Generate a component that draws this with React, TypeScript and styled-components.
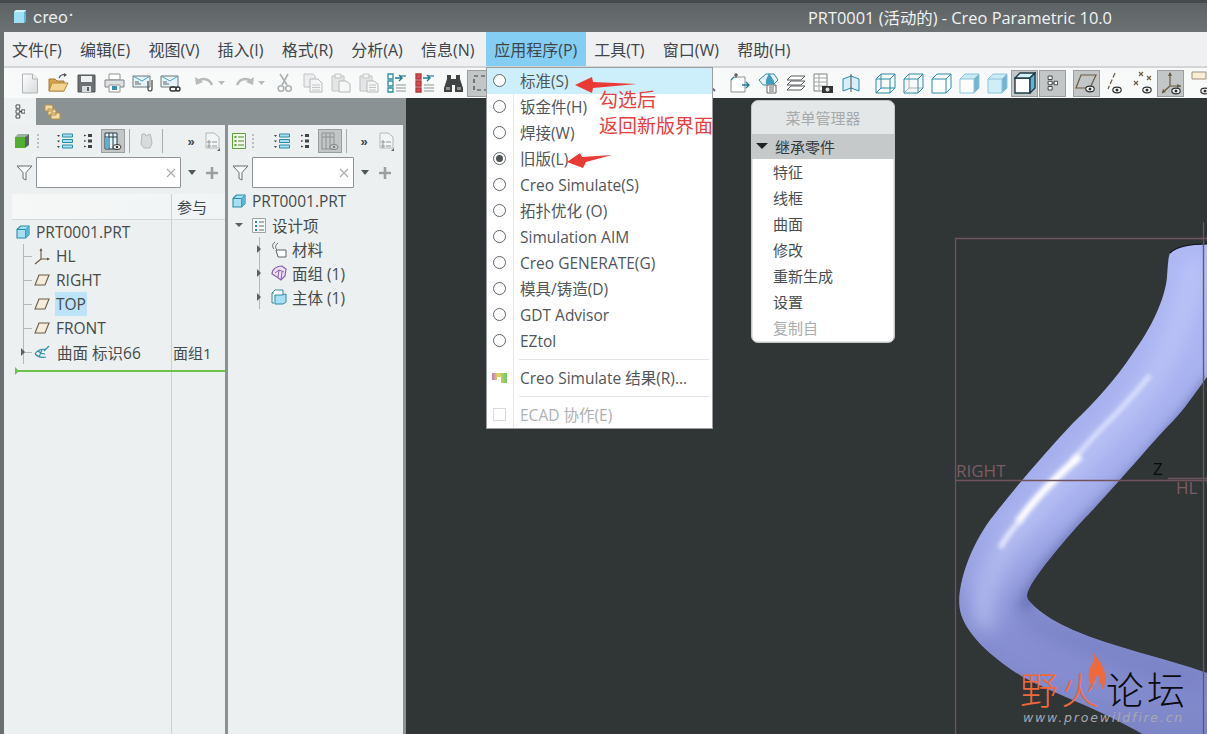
import React from "react";
import styled, { createGlobalStyle, css } from "styled-components";

const FONT = `"Open Sans", "Noto Sans CJK SC", "Noto Sans", sans-serif`;

const Global = createGlobalStyle`
  html, body { margin: 0; padding: 0; background: #303536; }
  * { box-sizing: border-box; }
`;

const Root = styled.div`
  position: relative;
  width: 1207px;
  height: 734px;
  overflow: hidden;
  display: flex;
  flex-direction: column;
  font-family: ${FONT};
  font-size: 15.5px;
  color: #454b4c;
`;

const TitleBar = styled.div`
  height: 32px;
  flex: none;
  display: flex;
  align-items: center;
  justify-content: space-between;
  padding: 0 95px 2px 13px;
  border-top: 3px solid #45494a;
  background: linear-gradient(#5d6364, #6c7273);
  color: #f1f3f3;
`;
const Logo = styled.div`
  display: flex;
  align-items: center;
  gap: 6px;
  font-size: 16.5px;
  font-family: "Inter", sans-serif;
  color: #e9eef0;
`;
const LogoDot = styled.sup`
  font-size: 7px;
  line-height: 0;
  margin-left: 1px;
  vertical-align: 6px;
`;
const AppTitle = styled.div`
  font-size: 16.4px;
  white-space: nowrap;
`;

const Body = styled.div`
  flex: 1;
  min-height: 0;
  display: flex;
  flex-direction: column;
  border-left: 4px solid #6a6f70;
`;

const MenuBar = styled.nav`
  height: 34px;
  flex: none;
  display: flex;
  align-items: stretch;
  background: #eff0f1;
`;
const MenuItem = styled.div<{ $open?: boolean }>`
  display: flex;
  align-items: center;
  padding: 0 8px;
  margin-right: 2.2px;
  white-space: nowrap;
  font-size: 16px;
  color: #40464a;
  ${(p) => p.$open && css`
    background: #84cdf3;
    padding-right: 9px;
    margin-left: 1.6px;
    margin-right: 0;
  `}
`;

const ToolBar = styled.div`
  height: 32px;
  flex: none;
  display: flex;
  align-items: center;
  overflow: hidden;
  background: #f8f9f9;
  border-top: 2px solid #d3d5d6;
`;
const Spacer = styled.div<{ $w: number }>`
  flex: none;
  width: ${(p) => p.$w}px;
`;
const Slot = styled.div<{ $w?: number; $active?: boolean; $h?: number }>`
  flex: none;
  width: ${(p) => p.$w ?? 28}px;
  height: ${(p) => p.$h ?? 27}px;
  display: flex;
  align-items: center;
  justify-content: center;
  ${(p) => p.$active && css`
    background: #c3c6c7;
    border: 1px solid #9a9e9f;
  `}
`;

const Main = styled.div`
  flex: 1;
  min-height: 0;
  display: flex;
`;
const Side = styled.aside`
  width: 402px;
  flex: none;
  display: flex;
  flex-direction: column;
  background: #8b9294;
`;
const TabStrip = styled.div`
  height: 27px;
  flex: none;
  display: flex;
`;
const Tab = styled.div<{ $active?: boolean }>`
  width: 32px;
  display: flex;
  align-items: center;
  justify-content: center;
  background: ${(p) => (p.$active ? "#edf1f1" : "transparent")};
`;
const Panels = styled.div`
  flex: 1;
  min-height: 0;
  display: flex;
  gap: 3px;
  padding-right: 3px;
`;
const Panel = styled.section<{ $w: number }>`
  width: ${(p) => p.$w}px;
  flex: none;
  display: flex;
  flex-direction: column;
  background: #ecf0f0;
`;
const PanelTools = styled.div`
  height: 32px;
  flex: none;
  display: flex;
  align-items: center;
`;
const Sep = styled.div`
  width: 1px;
  height: 24px;
  flex: none;
  background: #a9adae;
`;
const FilterRow = styled.div`
  height: 31px;
  flex: none;
  display: flex;
  align-items: center;
`;
const FilterInput = styled.div<{ $w: number }>`
  width: ${(p) => p.$w}px;
  height: 31px;
  flex: none;
  display: flex;
  align-items: center;
  justify-content: flex-end;
  padding-right: 4px;
  background: #fff;
  border: 1px solid #8f9596;
  border-radius: 1px;
`;

const Table = styled.div`
  position: relative;
  flex: 1;
  margin: 6px 0 0 8px;
  display: flex;
  flex-direction: column;
  &::after {
    content: "";
    position: absolute;
    left: 159px;
    top: 0;
    bottom: 0;
    width: 1px;
    background: #ccd1d2;
  }
`;
const TableHead = styled.div`
  height: 26px;
  flex: none;
  display: flex;
  align-items: center;
  justify-content: flex-end;
  padding: 0 18px 0 0;
  background: linear-gradient(90deg, #f6f8f8, #f1f4f4);
  border-bottom: 1px solid #d5d9da;
  font-size: 15px;
  color: #40464a;
`;
const Row = styled.div<{ $pad: number; $gap?: number }>`
  position: relative;
  height: 24px;
  flex: none;
  display: flex;
  align-items: center;
  gap: ${(p) => p.$gap ?? 6}px;
  padding-left: ${(p) => p.$pad}px;
  white-space: nowrap;
`;
const ChildRow = styled(Row)`
  &::before {
    content: "";
    position: absolute;
    left: 11px;
    top: 0;
    height: 100%;
    width: 1px;
    background: #b3b8b9;
  }
  &::after {
    content: "";
    position: absolute;
    left: 11px;
    top: 12px;
    width: 9px;
    height: 1px;
    background: #b3b8b9;
  }
`;
const NestedRow = styled(Row)`
  &::before {
    content: "";
    position: absolute;
    left: 31px;
    top: 0;
    height: 100%;
    width: 1px;
    background: #b3b8b9;
  }
`;
const Label = styled.span<{ $selected?: boolean }>`
  ${(p) => p.$selected && css`
    background: #bde3f8;
    line-height: 24px;
    margin: 0 -1px;
    padding: 0 1px;
  `}
`;
const RefCell = styled.span`
  position: absolute;
  left: 161px;
  font-size: 15px;
`;
const ArrowRight = styled.i<{ $left: number }>`
  position: absolute;
  z-index: 1;
  left: ${(p) => p.$left}px;
  top: 8px;
  width: 0;
  height: 0;
  border-left: 4px solid #5a6061;
  border-top: 4px solid transparent;
  border-bottom: 4px solid transparent;
`;
const ArrowDown = styled.i<{ $left: number }>`
  position: absolute;
  z-index: 1;
  left: ${(p) => p.$left}px;
  top: 10px;
  width: 0;
  height: 0;
  border-top: 4px solid #5a6061;
  border-left: 4px solid transparent;
  border-right: 4px solid transparent;
`;
const GreenLine = styled.div`
  position: relative;
  z-index: 1;
  flex: none;
  height: 1.5px;
  margin: 6px 0 0 3px;
  background: #6cc24a;
  &::before {
    content: "";
    position: absolute;
    left: 0;
    top: -3px;
    border-left: 4px solid #6cc24a;
    border-top: 4px solid transparent;
    border-bottom: 4px solid transparent;
  }
`;
const Tree = styled.div`
  margin-top: 1px;
  display: flex;
  flex-direction: column;
`;

const Canvas = styled.main`
  position: relative;
  flex: 1;
  min-width: 0;
  overflow: hidden;
  background: #303536;
`;
const Scene = styled.svg`
  position: absolute;
  inset: 0;
  width: 100%;
  height: 100%;
`;
const DatumText = styled.span<{ $x: number; $y: number; $dark?: boolean }>`
  position: absolute;
  left: ${(p) => p.$x}px;
  top: ${(p) => p.$y}px;
  font-family: "Open Sans", sans-serif;
  font-size: 17px;
  line-height: 20px;
  color: ${(p) => (p.$dark ? "#0a0a0a" : "#7d5c62")};
`;
const WmCn = styled.span<{ $x: number; $orange?: boolean }>`
  position: absolute;
  left: ${(p) => p.$x}px;
  top: 570px;
  font-family: "Noto Sans CJK SC", sans-serif;
  font-weight: 300;
  font-size: 38px;
  line-height: 40px;
  letter-spacing: 3px;
  white-space: nowrap;
  color: ${(p) => (p.$orange ? "#f0693a" : "#0c0c10")};
`;
const WmUrl = styled.span`
  position: absolute;
  left: 617px;
  top: 611px;
  font-family: "DejaVu Sans", sans-serif;
  font-style: italic;
  font-size: 12.5px;
  line-height: 18px;
  letter-spacing: 1.8px;
  white-space: nowrap;
  color: #a6a9b0;
`;

const Dropdown = styled.div`
  position: absolute;
  left: 486px;
  top: 67px;
  width: 227px;
  height: 362px;
  background: #fff;
  border: 1px solid #9a9ea0;
  z-index: 5;
  display: flex;
  flex-direction: column;
  &::before {
    content: "";
    position: absolute;
    left: 26px;
    top: 0;
    bottom: 0;
    width: 1px;
    background: #e6e8e9;
  }
`;
const DropItem = styled.div<{ $hot?: boolean; $off?: boolean }>`
  position: relative;
  height: 26px;
  flex: none;
  display: flex;
  align-items: center;
  white-space: nowrap;
  font-size: 15.5px;
  padding: 0 0 1px 33px;
  color: ${(p) => (p.$off ? "#adb1b3" : "#50565a")};
  ${(p) => p.$hot && css`background: #cdeffc;`}
`;
const DropIcon = styled.span`
  position: absolute;
  left: 5px;
  top: 5px;
  width: 15px;
  height: 15px;
  display: flex;
  align-items: center;
  justify-content: center;
`;
const Radio = styled.span<{ $on?: boolean }>`
  width: 13px;
  height: 13px;
  border-radius: 50%;
  border: 1.4px solid #5f6566;
  background: #fff;
  display: flex;
  align-items: center;
  justify-content: center;
  &::after {
    content: "";
    width: 7px;
    height: 7px;
    border-radius: 50%;
    background: ${(p) => (p.$on ? "#4f5556" : "transparent")};
  }
`;
const DropSep = styled.div<{ $mt: number; $mb: number }>`
  flex: none;
  height: 1px;
  margin: ${(p) => p.$mt}px 3px ${(p) => p.$mb}px 32px;
  background: #e2e4e5;
`;
const CheckBox = styled.span`
  width: 13px;
  height: 13px;
  border: 1px solid #d9dbdc;
  background: #fff;
`;

const Manager = styled.div`
  position: absolute;
  left: 345px;
  top: 2px;
  width: 144px;
  height: 243px;
  background: #e4e7e8;
  border: 1px solid #c4c7c8;
  border-radius: 7px;
  z-index: 3;
  display: flex;
  flex-direction: column;
  overflow: hidden;
`;
const ManagerTitle = styled.div`
  height: 33px;
  flex: none;
  display: flex;
  align-items: center;
  justify-content: center;
  color: #a6aaab;
  font-size: 15px;
`;
const ManagerHead = styled.div`
  height: 25px;
  flex: none;
  display: flex;
  align-items: center;
  gap: 7px;
  padding: 0 0 1px 4px;
  background: #c5c9ca;
  color: #33383a;
  font-size: 15px;
  &::before {
    content: "";
    border-top: 6px solid #1f2324;
    border-left: 6px solid transparent;
    border-right: 6px solid transparent;
  }
`;
const ManagerList = styled.div`
  flex: 1;
  margin: 0 1px 1px;
  background: #fff;
  display: flex;
  flex-direction: column;
`;
const ManagerItem = styled.div<{ $off?: boolean }>`
  height: 26px;
  flex: none;
  display: flex;
  align-items: center;
  padding: 0 0 2px 20px;
  font-size: 15px;
  color: ${(p) => (p.$off ? "#a9adae" : "#484e50")};
`;

const Overlay = styled.svg`
  position: absolute;
  left: 0;
  top: 0;
  width: 1207px;
  height: 734px;
  z-index: 7;
  pointer-events: none;
`;
const Note = styled.div<{ $y: number }>`
  position: absolute;
  left: 599px;
  top: ${(p) => p.$y}px;
  z-index: 8;
  color: #e4403d;
  font-family: "Noto Sans CJK SC", sans-serif;
  font-size: 19px;
  line-height: 26px;
  white-space: nowrap;
`;

/* ---------- icons ---------- */
type S = { s?: number };
const T = "#2b8ba6";

const CubeSmall = ({ s = 14 }: S) => (
  <svg width={s} height={s} viewBox="0 0 14 14">
    <path d="M1 4.5 4.5 1H13v8.5L9.5 13H1z" fill="#a7e0f4" stroke={T} strokeWidth="1.1" />
    <path d="M1 4.5h8.5V13M9.5 4.5 13 1" fill="none" stroke={T} strokeWidth="1" />
    <path d="M9.5 4.5 13 1v8.5L9.5 13z" fill="#5cb4d2" />
  </svg>
);
const NewDoc = () => (
  <svg width="18" height="21" viewBox="0 0 18 21">
    <defs><linearGradient id="nd" x1="0" y1="0" x2="1" y2="1"><stop offset="0" stopColor="#fff" /><stop offset="1" stopColor="#d5dadc" /></linearGradient></defs>
    <path d="M1.5 1h10l5 5v14h-15z" fill="url(#nd)" stroke="#aeb4b6" />
    <path d="M11.5 1v5h5" fill="#eef0f1" stroke="#aeb4b6" />
  </svg>
);
const OpenFolder = () => (
  <svg width="21" height="20" viewBox="0 0 21 20">
    <path d="M1 6h6l2 2h7v10H1z" fill="#d9a24c" stroke="#a07a3c" />
    <path d="M1 18 4 10h16l-4 8z" fill="#f3d48f" stroke="#b08a45" />
    <path d="M11 5c1-3 4-4 7-3" fill="none" stroke="#555" strokeWidth="1.3" />
    <path d="M16 0l3 2-3 2z" fill="#555" />
  </svg>
);
const Save = () => (
  <svg width="19" height="19" viewBox="0 0 19 19">
    <path d="M1 1h17v17H1z" fill="#6c7274" stroke="#4f5455" />
    <path d="M4 2h11v6H4z" fill="#eef0f1" />
    <path d="M5 12h9v6H5z" fill="#d8dcdd" />
    <path d="M10 13h2v4h-2z" fill="#596062" />
  </svg>
);
const Printer = () => (
  <svg width="21" height="20" viewBox="0 0 21 20">
    <path d="M5 1h11v6H5z" fill="#fff" stroke="#8f9596" />
    <path d="M1 7h19v7H1z" fill="#dfe2e3" stroke="#7e8485" />
    <path d="M5 12h11v7H5z" fill="#fff" stroke="#8f9596" />
    <path d="M8 13h5v4H8z" fill="#3d8db5" />
  </svg>
);
const Mail = ({ clip }: { clip?: boolean }) => (
  <svg width="21" height="20" viewBox="0 0 21 20">
    <path d="M1 3h17v11H1z" fill="#e6f3f8" stroke="#6f7778" />
    <path d="M1 3l9 5 8-5" fill="none" stroke="#4aa2c4" />
    <path d="M3 11h6M3 9h4" stroke="#5f6566" />
    {clip ? (
      <path d="M16 8v8a2 2 0 0 0 4 0V7" fill="none" stroke="#444" strokeWidth="1.2" />
    ) : (
      <path d="M10 16a2 2 0 0 1 2-2h2a2 2 0 0 1 0 4h-2a2 2 0 0 1-2-2zm6 0a2 2 0 0 1 2-2 2 2 0 0 1 0 4 2 2 0 0 1-2-2z" fill="none" stroke="#333" strokeWidth="1.4" />
    )}
  </svg>
);
const Undo = ({ flip }: { flip?: boolean }) => (
  <svg width="32" height="16" viewBox="0 0 32 16">
    <g transform={flip ? "translate(21 0) scale(-1 1)" : undefined}>
      <path d="M4 6c4-3 11-3 14 4" fill="none" stroke="#b6babb" strokeWidth="2.6" />
      <path d="M1 2l1 8 7-3z" fill="#b6babb" />
    </g>
    <path d="M24 6h7l-3.5 4z" fill="#b6babb" />
  </svg>
);
const Scissors = () => (
  <svg width="16" height="20" viewBox="0 0 16 20">
    <path d="M3 1l7 11M11 1 5 12" stroke="#aab0b2" strokeWidth="1.6" fill="none" />
    <circle cx="4" cy="15.5" r="2.8" fill="none" stroke="#aab0b2" strokeWidth="1.5" />
    <circle cx="11.5" cy="15.5" r="2.8" fill="none" stroke="#aab0b2" strokeWidth="1.5" />
  </svg>
);
const Copy = () => (
  <svg width="20" height="20" viewBox="0 0 20 20">
    <path d="M1 1h9l2 2v11H1z" fill="#eceeef" stroke="#c0c4c5" />
    <path d="M7 6h8l4 4v9H7z" fill="#f4f5f6" stroke="#b6babb" />
    <path d="M9 12h8M9 14.500h8M9 17h8" stroke="#c2c6c7" />
  </svg>
);
const Paste = ({ lines }: { lines?: boolean }) => (
  <svg width="20" height="20" viewBox="0 0 20 20">
    <path d="M1 3h12v15H1z" fill="#e3e5e6" stroke="#bfc3c4" />
    <path d="M4 1h6v4H4z" fill="#f3f4f4" stroke="#bfc3c4" />
    <path d="M8 8h7l4 3v8H8z" fill="#f5f6f6" stroke="#b6babb" />
    {lines && <path d="M10 12h7M10 14.500h7M10 17h7" stroke="#bfc3c4" />}
  </svg>
);
const RepeatList = ({ c }: { c: string }) => (
  <svg width="20" height="20" viewBox="0 0 20 20">
    <path d="M1 1h5v5H1zM1 8h5v5H1zM1 15h5v4H1z" fill={c === "red" ? "#d84a50" : "#fff"} stroke={c === "red" ? "#b7353a" : T} strokeWidth="1.3" />
    <path d="M8 5h7M12 2l3 3-3 3" fill="none" stroke="#1f7d9a" strokeWidth="1.4" />
    <path d="M19 3h-6" stroke="#1f7d9a" strokeWidth="1.2" />
    <path d="M9 12h10M9 15h10M9 18h10" stroke="#8f9596" />
  </svg>
);
const Binoculars = () => (
  <svg width="21" height="19" viewBox="0 0 21 19">
    <path d="M4 1h4v4h5V1h4v4l3 9v4h-8v-7H9v7H1v-4l3-9z" fill="#3f4344" />
    <path d="M3 13h4v3H3zM14 13h4v3h-4z" fill="#8b9092" />
  </svg>
);
const BoxSelect = () => (
  <svg width="16" height="16" viewBox="0 0 16 16">
    <path d="M1 1h14v14H1z" fill="none" stroke="#3b4041" strokeDasharray="4 3" strokeWidth="1.2" />
  </svg>
);
const Lens = () => (
  <svg width="24" height="22" viewBox="0 0 24 22">
    <circle cx="8" cy="8" r="6" fill="#eef4f6" stroke="#7b8182" strokeWidth="1.3" />
    <path d="M12 12l7 7" stroke="#6b7172" strokeWidth="2" />
  </svg>
);
const Gem = () => (
  <svg width="22" height="23" viewBox="0 0 22 23">
    <path d="M5 5h11v15H2V8z" fill="#fff" stroke="#8a9091" />
    <path d="M5 5 2 8M13 13h7M17 10l3 3-3 3" fill="none" stroke="#1f7d9a" strokeWidth="1.3" />
    <path d="M7 1v5M5 3h4" stroke="#333" />
  </svg>
);
const Section = () => (
  <svg width="21" height="22" viewBox="0 0 21 22">
    <path d="M1 8l7-6h8l4 6-5 5H5z" fill="#e8f6fb" stroke={T} />
    <path d="M11 1l5 8v3h-8V8z" fill="#3f9dc4" />
    <path d="M9 13h9v8H9z" fill="#fff" stroke="#666" />
    <path d="M11 15h5M11 17h5M11 19h5" stroke="#666" />
  </svg>
);
const Layers = () => (
  <svg width="20" height="16" viewBox="0 0 20 16">
    <path d="M5 1h14l-4 4H1zM5 6h14l-4 4H1zM5 11h14l-4 4H1z" fill="#fff" stroke="#565c5d" />
  </svg>
);
const TableCam = () => (
  <svg width="21" height="21" viewBox="0 0 21 21">
    <path d="M1 1h13v17H1z" fill="#fff" stroke="#7a8081" />
    <path d="M1 5h13M1 9h13M1 13h13M6 1v17" stroke="#a0a5a6" />
    <path d="M9 13h11v7H9z" fill="#333" />
    <circle cx="14.500" cy="16.500" r="2" fill="#ddd" />
  </svg>
);
const Book = () => (
  <svg width="18" height="20" viewBox="0 0 18 20">
    <path d="M9 3 1 6v12l8-3 8 3V6z" fill="#d8eff7" stroke={T} />
    <path d="M9 1v18" stroke="#4d5354" />
  </svg>
);
const Wire = ({ v }: { v: number }) => (
  <svg width="21" height="21" viewBox="0 0 21 21">
    {v >= 3 && <path d="M1 6h14v14H1z" fill="#fff" />}
    {v === 3 && <path d="M15 6l5-5v14l-5 5z" fill="#fff" />}
    {v >= 4 && <path d="M15 6l5-5v14l-5 5z" fill="#72b5d2" />}
    {v >= 4 && <path d="M1 6l5-5h14l-5 5z" fill="#c8ebf6" />}
    {v === 5 && <path d="M1 6h14v14H1z" fill="#cfeef7" />}
    {v <= 2 && <path d="M6 1v14H20M6 15 1 20" fill="none" stroke={v === 1 ? T : "#a8b2b5"} />}
    <path d="M1 6h14v14H1zM1 6l5-5h14v14l-5 5M15 6l5-5" fill="none" stroke={v >= 4 ? "#8cc4d8" : T} strokeWidth="1" />
  </svg>
);
const ShadeCube = () => (
  <svg width="22" height="22" viewBox="0 0 22 22">
    <path d="M1 6h15v15H1z" fill="#fff" stroke="#1b3d4a" strokeWidth="1.4" />
    <path d="M1 6l5-5h15l-5 5z" fill="#d5f1fa" stroke="#1b3d4a" strokeWidth="1.4" />
    <path d="M16 6l5-5v15l-5 5z" fill="#5fb4d6" stroke="#1b3d4a" strokeWidth="1.4" />
  </svg>
);
const TreeGlyph = ({ c = "#3f4546", s = 16 }: S & { c?: string }) => (
  <svg width={s * 0.7} height={s} viewBox="0 0 11 16">
    <path d="M1 1h4v3.500H1zM1 6.250h4v3.500H1zM1 11.500h4V15H1zM7 6.250h3.500v3.500H7z" fill="#fff" stroke={c} />
    <path d="M5 8h2" stroke={c} />
  </svg>
);
const Eye = ({ x, y }: { x: number; y: number }) => (
  <g>
    <ellipse cx={x} cy={y} rx="4.200" ry="2.800" fill="#fff" stroke="#2f3435" strokeWidth="1.200" />
    <circle cx={x} cy={y} r="1.500" fill="#2f3435" />
  </g>
);
const PlaneEye = ({ s = 24, color = "#6a5a3e" }: S & { color?: string }) => (
  <svg width={s} height={s} viewBox="0 0 24 24">
    <path d="M6 4h15l-6 13H1z" fill="none" stroke={color} strokeWidth="1.2" />
    <Eye x={15} y={18} />
  </svg>
);
const AxisEye = () => (
  <svg width="20" height="24" viewBox="0 0 20 24">
    <path d="M10 2 3 18" stroke="#6a5a3e" strokeWidth="1.2" strokeDasharray="5 2" />
    <Eye x={12} y={19} />
  </svg>
);
const PointEye = () => (
  <svg width="22" height="24" viewBox="0 0 22 24">
    <path d="M6 1l4 4M10 1 6 5M14 5l4 4M18 5l-4 4M1 10l4 4M5 10l-4 4" stroke="#6a5a3e" strokeWidth="1.100" />
    <Eye x={14} y={19} />
  </svg>
);
const CsysEye = () => (
  <svg width="24" height="24" viewBox="0 0 24 24">
    <path d="M11 2v13M11 15l11 0M11 15 3 22" fill="none" stroke="#6a5a3e" strokeWidth="1.200" />
    <path d="M11 1l-2 4h4zM22 15l-4-2v4zM3 22l1-4 3 3z" fill="#6a5a3e" />
    <Eye x={17} y={20} />
  </svg>
);
const NoteEye = () => (
  <svg width="24" height="24" viewBox="0 0 24 24">
    <path d="M1 1h14v7H1z" fill="#fbeed3" stroke="#9a9080" />
    <Eye x={14} y={20} />
  </svg>
);
const FolderTabs = () => (
  <svg width="17" height="17" viewBox="0 0 17 17">
    <path d="M1 2h7l1 2v4H1zM4 6h7l1 2v4H4zM7 10h9v6H7z" fill="#f3dca6" stroke="#b28f4c" />
  </svg>
);
const GreenCube = () => (
  <svg width="14" height="14" viewBox="0 0 14 14">
    <path d="M0 3h10v11H0z" fill="#4fb02e" />
    <path d="M0 3l3-3h11l-4 3z" fill="#9ab0a0" />
    <path d="M10 3l4-3v11l-4 3z" fill="#5a6264" />
  </svg>
);
const Dots = () => (
  <svg width="4" height="16" viewBox="0 0 4 16">
    <path d="M2 1v2M2 5v2M2 9v2M2 13v2" stroke="#a5aaab" strokeWidth="1.400" />
  </svg>
);
const ListCyan = () => (
  <svg width="16" height="16" viewBox="0 0 16 16">
    <path d="M5.500 1h10v3h-10zM5.500 6.500h10v3h-10zM5.500 12h10v3h-10z" fill="#a8e0f4" stroke="#2b8ba6" />
    <path d="M0 2l3 0-1.500 2zM0 7.500l3 0-1.500 2zM0 13l3 0-1.500 2z" fill="#3f4546" />
  </svg>
);
const TreeMini = () => (
  <svg width="9" height="16" viewBox="0 0 9 16">
    <path d="M4 1h4v3H4zM4 6.500h4v3H4zM4 12h4v3H4z" fill="#3f4546" />
    <path d="M0 1.500l2.500 1L0 3.500zM0 7l2.500 1L0 9zM0 12.500l2.500 1L0 14.500z" fill="#3f4546" />
  </svg>
);
const TableEye = ({ muted }: { muted?: boolean }) => (
  <svg width="18" height="19" viewBox="0 0 18 19">
    <path d="M1 1h12v16H1z" fill={muted ? "#c3c6c7" : "#e0f3fa"} stroke={muted ? "#8b9091" : "#2c3a40"} />
    <path d="M1 5h12M5 1v16M9 1v16" stroke={muted ? "#8b9091" : "#2c3a40"} />
    {!muted && <path d="M1.500 5.500h3v11h-3z" fill="#56b4da" />}
    <ellipse cx="13" cy="15" rx="4" ry="2.500" fill={muted ? "#d5d7d8" : "#fff"} stroke={muted ? "#7b8081" : "#333"} />
    <circle cx="13" cy="15" r="1.300" fill={muted ? "#7b8081" : "#333"} />
  </svg>
);
const Ghost = () => (
  <svg width="15" height="16" viewBox="0 0 15 16">
    <path d="M3 1h3l1 2 4-2 1 3 1 6-2 5H5L2 11z" fill="#d8dbdc" stroke="#b5b9ba" />
  </svg>
);
const ChevronText = styled.span`
  font-size: 13px;
  font-weight: 700;
  color: #3f4546;
  font-family: "Liberation Sans", sans-serif;
`;
const Chevrons = () => <ChevronText>»</ChevronText>;
const NoteDoc = () => (
  <svg width="15" height="19" viewBox="0 0 15 19">
    <path d="M1 1h8l5 4v11H1z" fill="#f3f5f5" stroke="#b3b8b9" />
    <path d="M3 9h2v2H3zM3 13h2v2H3zM7 10h5M7 14h5" fill="none" stroke="#8f9596" />
    <path d="M15 16v3h-3z" fill="#5f6566" />
  </svg>
);
const DocList = () => (
  <svg width="14" height="16" viewBox="0 0 14 16">
    <path d="M0.500 0.500h13v15h-13z" fill="#f1f7e9" stroke="#5ea23a" />
    <path d="M2.500 3h2v2h-2zM2.500 7h2v2h-2zM2.500 11h2v2h-2z" fill="#5ea23a" />
    <path d="M6 4h6M6 8h6M6 12h6" stroke="#4e8d33" />
  </svg>
);
const Funnel = () => (
  <svg width="17" height="16" viewBox="0 0 17 16">
    <path d="M1 1h15l-6 6.500V15l-3-1.500v-6z" fill="#f7f8f8" stroke="#686e6f" />
  </svg>
);
const Clear = () => (
  <svg width="10" height="10" viewBox="0 0 10 10">
    <path d="M1 1l8 8M9 1 1 9" stroke="#a7abac" strokeWidth="1.100" />
  </svg>
);
const Caret = () => (
  <svg width="8" height="5" viewBox="0 0 8 5"><path d="M0 0h8L4 5z" fill="#505657" /></svg>
);
const Plus = () => (
  <svg width="12" height="12" viewBox="0 0 12 12"><path d="M6 0v12M0 6h12" stroke="#9a9fa0" strokeWidth="2.600" /></svg>
);
const Csys = () => (
  <svg width="16" height="17" viewBox="0 0 16 17">
    <path d="M7 2v9M7 11h8M7 11l-6 5" fill="none" stroke="#6a5a3e" strokeWidth="1.100" />
    <path d="M7 0 5.500 3h3zM16 11l-3-1.500v3z" fill="#6a5a3e" />
  </svg>
);
const Plane = () => (
  <svg width="16" height="12" viewBox="0 0 16 12">
    <path d="M5 1h10l-4 10H1z" fill="#f4ecdc" stroke="#6a5a3e" strokeWidth="1.100" />
  </svg>
);
const Surface = () => (
  <svg width="17" height="15" viewBox="0 0 17 15">
    <path d="M1 9c2-4 7-5 11-5l-2 2 5-5M1 9c3 3 7 4 11 3M4 6c2 2 5 3 7 3M5 12l3-7" fill="none" stroke="#2b8ba6" strokeWidth="1.100" />
  </svg>
);
const Outline = () => (
  <svg width="14" height="15" viewBox="0 0 14 15">
    <path d="M0.500 0.500h13v14h-13z" fill="#f5f8f9" stroke="#9aa4a7" />
    <path d="M3 3h2v2H3zM3 7h2v2H3zM3 11h2v2H3z" fill="#2b8ba6" />
    <path d="M7 4h5M7 8h5M7 12h5" stroke="#6a7172" />
  </svg>
);
const Material = () => (
  <svg width="16" height="17" viewBox="0 0 16 17">
    <path d="M4 1C1 3 1 6 3 8M7 2C4 4 4 7 6 9" fill="none" stroke="#5f6566" />
    <path d="M5 9h10v7H7z" fill="#fff" stroke="#5f6566" />
  </svg>
);
const Quilt = () => (
  <svg width="16" height="16" viewBox="0 0 16 16">
    <path d="M1 9C1 4 6 1 11 1l4 3-1 7-4 4-4-3z" fill="#eadff3" stroke="#8a5fb0" strokeWidth="1.200" />
    <path d="M4 8l4-3 5 2M7 12 8 5M10 15l1-8" fill="none" stroke="#8a5fb0" />
  </svg>
);
const Bodies = () => (
  <svg width="16" height="16" viewBox="0 0 16 16">
    <path d="M1 4 4 1h8v8l-2 2" fill="#fff" stroke="#2b8ba6" />
    <path d="M1 4v10h2M1 4h2" fill="none" stroke="#2b8ba6" />
    <path d="M4 6h7l4-1v8l-3 2H4z" fill="#a7e0f4" stroke="#2b8ba6" />
  </svg>
);
const SimResult = () => (
  <svg width="15" height="10" viewBox="0 0 15 10">
    <defs><linearGradient id="sr" x1="0" x2="1"><stop offset="0" stopColor="#c079c8" /><stop offset=".4" stopColor="#e8d84a" /><stop offset="1" stopColor="#6fc46f" /></linearGradient></defs>
    <path d="M0 0h15v10H9V4H5v3H0z" fill="url(#sr)" />
  </svg>
);

const menus = ["文件(F)", "编辑(E)", "视图(V)", "插入(I)", "格式(R)", "分析(A)", "信息(N)"];
const appItems = ["标准(S)", "钣金件(H)", "焊接(W)", "旧版(L)", "Creo Simulate(S)", "拓扑优化 (O)", "Simulation AIM", "Creo GENERATE(G)", "模具/铸造(D)", "GDT Advisor", "EZtol"];
const managerItems = ["特征", "线框", "曲面", "修改", "重新生成", "设置"];

const TUBE =
  "M1170 253C1176 247 1190 244 1207 244V377C1190 400 1180 415 1167 427C1150 445 1105 498 1083 520C1060 545 1036 575 1030 587C1026 594 1026 598 1030 602C1042 615 1060 624 1073 630C1115 648 1165 658 1207 673V745H1160C1110 712 1060 697 1023 677C995 660 965 635 960 610C956 590 968 550 990 520C1018 484 1045 453 1073 423C1095 402 1115 380 1133 353C1150 330 1165 300 1167 277C1168 265 1168 258 1170 253Z";

const Model = () => (
  <Scene viewBox="406 98 801 636">
    <defs>
      <linearGradient id="tubeBase" x1="0" y1="0" x2="0" y2="1">
        <stop offset="0" stopColor="#aeb8f4" />
        <stop offset="0.55" stopColor="#a4adeb" />
        <stop offset="0.78" stopColor="#8991d4" />
        <stop offset="1" stopColor="#7c85c6" />
      </linearGradient>
      <clipPath id="tubeClip"><path d={TUBE} /></clipPath>
      <filter id="b2" x="-30%" y="-30%" width="160%" height="160%"><feGaussianBlur stdDeviation="2" /></filter>
      <filter id="b6" x="-30%" y="-30%" width="160%" height="160%"><feGaussianBlur stdDeviation="6" /></filter>
      <filter id="b10" x="-30%" y="-30%" width="160%" height="160%"><feGaussianBlur stdDeviation="10" /></filter>
    </defs>
    <path d={TUBE} fill="url(#tubeBase)" />
    <g clipPath="url(#tubeClip)">
      <path d="M1212 380C1190 412 1165 440 1140 468C1115 496 1095 512 1075 535C1055 558 1035 578 1024 610" fill="none" stroke="#5f68ac" strokeWidth="12" filter="url(#b6)" opacity="0.85" />
      <path d="M1022 610C1045 632 1120 655 1207 682" fill="none" stroke="#6f78bc" strokeWidth="24" filter="url(#b10)" opacity="0.5" />
      <path d="M1195 260C1185 320 1165 370 1125 415C1085 460 1035 505 1005 550C985 580 978 605 985 630" fill="none" stroke="#c6cefb" strokeWidth="22" filter="url(#b10)" opacity="0.6" />
      <path d="M1150 375C1125 408 1095 432 1072 462" fill="none" stroke="#e2e8ff" strokeWidth="5" filter="url(#b2)" opacity="0.85" />
      <path d="M1080 456C1055 478 1035 498 1018 522" fill="none" stroke="#ffffff" strokeWidth="7" filter="url(#b2)" />
      <path d="M1020 520C1012 530 1006 537 1000 548" fill="none" stroke="#f2f4ff" strokeWidth="5" filter="url(#b2)" opacity="0.85" />
      <path d="M960 590C964 625 985 655 1030 682C1070 705 1110 722 1150 742" fill="none" stroke="#7a83c4" strokeWidth="8" filter="url(#b6)" opacity="0.4" />
    </g>
    <path d="M1170 253C1176 247 1190 244 1207 244" fill="none" stroke="#0e1018" strokeWidth="1.200" />
    <g fill="none" stroke="#6f555b" strokeWidth="1.300">
      <path d="M955.500 734V238.500H1207" />
      <path d="M955.500 480.500H1207" />
      <path d="M1203.500 222V734" />
    </g>
    <path d="M1168 478.500H1207" stroke="#6f555b" strokeWidth="1.300" />
    <path d="M1103 690c2-6 4-12 1-20-2-6-6-11-10-17 1 5 0 8-2 11-3 5-4 10-3 15 1 4 2 7 4 9 1-7 2-10 5-14 1 5 2 9 5 16z" fill="#f0693a" />
  </Scene>
);

export default function App() {
  return (
    <Root>
      <Global />
      <TitleBar>
        <Logo>
          <svg width="14" height="15" viewBox="0 0 14 15">
            <path d="M1 3 3 1h10v11l-2 2H1z" fill="#9ee0f7" />
            <path d="M11 3l2-2v11l-2 2z" fill="#5eb2d4" />
            <path d="M1 3l2-2h10l-2 2z" fill="#d7f2fb" />
          </svg>
          <span>creo<LogoDot>•</LogoDot></span>
        </Logo>
        <AppTitle>PRT0001 (活动的) - Creo Parametric 10.0</AppTitle>
      </TitleBar>
      <Body>
        <MenuBar>
          {menus.map((m) => <MenuItem key={m}>{m}</MenuItem>)}
          <MenuItem $open>应用程序(P)</MenuItem>
          <MenuItem>工具(T)</MenuItem>
          <MenuItem>窗口(W)</MenuItem>
          <MenuItem>帮助(H)</MenuItem>
        </MenuBar>
        <ToolBar>
          <Spacer $w={12} />
          <Slot><NewDoc /></Slot>
          <Slot><OpenFolder /></Slot>
          <Slot><Save /></Slot>
          <Slot><Printer /></Slot>
          <Slot><Mail clip /></Slot>
          <Slot><Mail /></Slot>
          <Spacer $w={7} />
          <Slot $w={38}><Undo /></Slot>
          <Slot $w={41}><Undo flip /></Slot>
          <Spacer $w={1} />
          <Slot><Scissors /></Slot>
          <Slot><Copy /></Slot>
          <Slot><Paste /></Slot>
          <Slot><Paste lines /></Slot>
          <Slot><RepeatList c="blue" /></Slot>
          <Slot><RepeatList c="red" /></Slot>
          <Slot><Binoculars /></Slot>
          <Slot $active><BoxSelect /></Slot>
          <Spacer $w={199} />
          <Slot><Lens /></Slot>
          <Spacer $w={4} />
          <Slot><Gem /></Slot>
          <Slot><Section /></Slot>
          <Slot $w={27}><Layers /></Slot>
          <Slot><TableCam /></Slot>
          <Slot><Book /></Slot>
          <Spacer $w={6} />
          <Slot><Wire v={1} /></Slot>
          <Slot><Wire v={2} /></Slot>
          <Slot><Wire v={3} /></Slot>
          <Slot><Wire v={4} /></Slot>
          <Slot><Wire v={5} /></Slot>
          <Slot $w={27} $active><ShadeCube /></Slot>
          <Spacer $w={1} />
          <Slot $w={27} $active><TreeGlyph /></Slot>
          <Spacer $w={7} />
          <Slot $w={27} $active><PlaneEye /></Slot>
          <Slot $w={30}><AxisEye /></Slot>
          <Slot $w={27}><PointEye /></Slot>
          <Slot $w={27} $active><CsysEye /></Slot>
          <Spacer $w={5} />
          <Slot $w={28}><NoteEye /></Slot>
        </ToolBar>
        <Main>
          <Side>
            <TabStrip>
              <Tab $active><TreeGlyph s={15} /></Tab>
              <Tab><FolderTabs /></Tab>
            </TabStrip>
            <Panels>
              <Panel $w={221}>
                <PanelTools>
                  <Spacer $w={8} />
                  <Slot $w={20}><GreenCube /></Slot>
                  <Slot $w={12}><Dots /></Slot>
                  <Spacer $w={8} />
                  <Slot $w={26}><ListCyan /></Slot>
                  <Slot $w={20}><TreeMini /></Slot>
                  <Spacer $w={3} />
                  <Slot $w={24} $h={24} $active><TableEye /></Slot>
                  <Spacer $w={4} />
                  <Sep />
                  <Spacer $w={4} />
                  <Slot $w={24}><Ghost /></Slot>
                  <Spacer $w={4} />
                  <Sep />
                  <Spacer $w={20} />
                  <Slot $w={16}><Chevrons /></Slot>
                  <Spacer $w={2} />
                  <Slot $w={22}><NoteDoc /></Slot>
                </PanelTools>
                <FilterRow>
                  <Spacer $w={8} />
                  <Slot $w={24}><Funnel /></Slot>
                  <FilterInput $w={145}><Clear /></FilterInput>
                  <Slot $w={21}><Caret /></Slot>
                  <Slot $w={20}><Plus /></Slot>
                </FilterRow>
                <Table>
                  <TableHead>参与</TableHead>
                  <Row $pad={4}><CubeSmall /><Label>PRT0001.PRT</Label></Row>
                  <ChildRow $pad={22}><Csys /><Label>HL</Label></ChildRow>
                  <ChildRow $pad={22}><Plane /><Label>RIGHT</Label></ChildRow>
                  <ChildRow $pad={22}><Plane /><Label $selected>TOP</Label></ChildRow>
                  <ChildRow $pad={22}><Plane /><Label>FRONT</Label></ChildRow>
                  <ChildRow $pad={22}>
                    <ArrowRight $left={9} />
                    <Surface /><Label>曲面 标识66</Label><RefCell>面组1</RefCell>
                  </ChildRow>
                  <GreenLine />
                </Table>
              </Panel>
              <Panel $w={175}>
                <PanelTools>
                  <Spacer $w={2} />
                  <Slot $w={18}><DocList /></Slot>
                  <Slot $w={10}><Dots /></Slot>
                  <Spacer $w={11} />
                  <Slot $w={26}><ListCyan /></Slot>
                  <Spacer $w={5} />
                  <Slot $w={10}><TreeMini /></Slot>
                  <Spacer $w={8} />
                  <Slot $w={24} $h={24} $active><TableEye muted /></Slot>
                  <Spacer $w={4} />
                  <Sep />
                  <Spacer $w={9} />
                  <Slot $w={16}><Chevrons /></Slot>
                  <Spacer $w={3} />
                  <Slot $w={22}><NoteDoc /></Slot>
                </PanelTools>
                <FilterRow>
                  <Slot $w={24}><Funnel /></Slot>
                  <FilterInput $w={102}><Clear /></FilterInput>
                  <Slot $w={21}><Caret /></Slot>
                  <Slot $w={20}><Plus /></Slot>
                </FilterRow>
                <Tree>
                  <Row $pad={4}><CubeSmall /><Label>PRT0001.PRT</Label></Row>
                  <Row $pad={24}><ArrowDown $left={7} /><Outline /><Label>设计项</Label></Row>
                  <NestedRow $pad={43} $gap={5}><ArrowRight $left={29} /><Material /><Label>材料</Label></NestedRow>
                  <NestedRow $pad={43} $gap={5}><ArrowRight $left={29} /><Quilt /><Label>面组 (1)</Label></NestedRow>
                  <NestedRow $pad={43} $gap={5}><ArrowRight $left={29} /><Bodies /><Label>主体 (1)</Label></NestedRow>
                </Tree>
              </Panel>
            </Panels>
          </Side>
          <Canvas>
            <Model />
            <DatumText $x={550} $y={363}>RIGHT</DatumText>
            <DatumText $x={747} $y={361} $dark>Z</DatumText>
            <DatumText $x={770} $y={380}>HL</DatumText>
            <WmCn $x={614} $orange>野火</WmCn>
            <WmCn $x={700}>论坛</WmCn>
            <WmUrl>www.proewildfire.cn</WmUrl>
            <Manager>
              <ManagerTitle>菜单管理器</ManagerTitle>
              <ManagerHead>继承零件</ManagerHead>
              <ManagerList>
                {managerItems.map((m) => <ManagerItem key={m}>{m}</ManagerItem>)}
                <ManagerItem $off>复制自</ManagerItem>
              </ManagerList>
            </Manager>
          </Canvas>
        </Main>
      </Body>
      <Dropdown>
        {appItems.map((t, i) => (
          <DropItem key={t} $hot={i === 0}>
            <DropIcon><Radio $on={i === 3} /></DropIcon>
            {t}
          </DropItem>
        ))}
        <DropSep $mt={5} $mb={5} />
        <DropItem>
          <DropIcon><SimResult /></DropIcon>
          Creo Simulate 结果(R)...
        </DropItem>
        <DropSep $mt={5} $mb={5} />
        <DropItem $off>
          <DropIcon><CheckBox /></DropIcon>
          ECAD 协作(E)
        </DropItem>
      </Dropdown>
      <Overlay viewBox="0 0 1207 734">
        <polygon points="575,85 592,77 593,82 637,84 593,88 592,93" fill="#e93a36" />
        <polygon points="567,162 580,153 582,157 612,155 586,162 583,168" fill="#e93a36" />
      </Overlay>
      <Note $y={86}>勾选后</Note>
      <Note $y={112}>返回新版界面</Note>
    </Root>
  );
}
